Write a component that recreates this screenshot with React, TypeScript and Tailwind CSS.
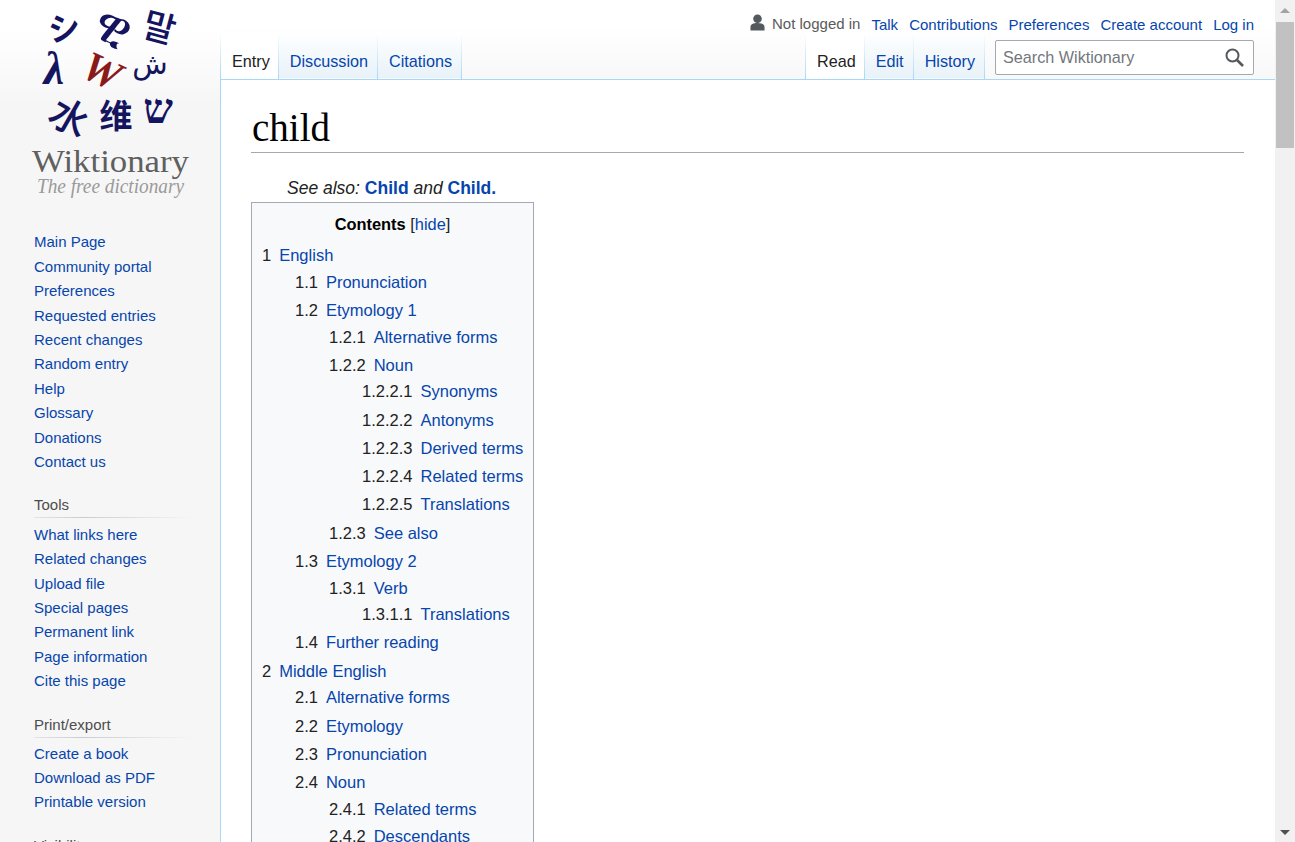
const mainNav = ["Main Page", "Community portal", "Preferences", "Requested entries", "Recent changes", "Random entry", "Help", "Glossary", "Donations", "Contact us"];
const toolsNav = ["What links here", "Related changes", "Upload file", "Special pages", "Permanent link", "Page information", "Cite this page"];
const printNav = ["Create a book", "Download as PDF", "Printable version"];

type TocItem = { num: string; label: string; pad: string; h: string };

// row heights are not even in the page, nested lists add a bit
const toc: TocItem[] = [
  { num: "1", label: "English", pad: "pl-[10px]", h: "h-[27px]" },
  { num: "1.1", label: "Pronunciation", pad: "pl-[43px]", h: "h-[28px]" },
  { num: "1.2", label: "Etymology 1", pad: "pl-[43px]", h: "h-[27px]" },
  { num: "1.2.1", label: "Alternative forms", pad: "pl-[77px]", h: "h-[28px]" },
  { num: "1.2.2", label: "Noun", pad: "pl-[77px]", h: "h-[26px]" },
  { num: "1.2.2.1", label: "Synonyms", pad: "pl-[110px]", h: "h-[29px]" },
  { num: "1.2.2.2", label: "Antonyms", pad: "pl-[110px]", h: "h-[28px]" },
  { num: "1.2.2.3", label: "Derived terms", pad: "pl-[110px]", h: "h-[28px]" },
  { num: "1.2.2.4", label: "Related terms", pad: "pl-[110px]", h: "h-[28px]" },
  { num: "1.2.2.5", label: "Translations", pad: "pl-[110px]", h: "h-[29px]" },
  { num: "1.2.3", label: "See also", pad: "pl-[77px]", h: "h-[28px]" },
  { num: "1.3", label: "Etymology 2", pad: "pl-[43px]", h: "h-[27px]" },
  { num: "1.3.1", label: "Verb", pad: "pl-[77px]", h: "h-[26px]" },
  { num: "1.3.1.1", label: "Translations", pad: "pl-[110px]", h: "h-[28px]" },
  { num: "1.4", label: "Further reading", pad: "pl-[43px]", h: "h-[29px]" },
  { num: "2", label: "Middle English", pad: "pl-[10px]", h: "h-[26px]" },
  { num: "2.1", label: "Alternative forms", pad: "pl-[43px]", h: "h-[29px]" },
  { num: "2.2", label: "Etymology", pad: "pl-[43px]", h: "h-[28px]" },
  { num: "2.3", label: "Pronunciation", pad: "pl-[43px]", h: "h-[28px]" },
  { num: "2.4", label: "Noun", pad: "pl-[43px]", h: "h-[27px]" },
  { num: "2.4.1", label: "Related terms", pad: "pl-[77px]", h: "h-[27px]" },
  { num: "2.4.2", label: "Descendants", pad: "pl-[77px]", h: "h-[28px]" },
];

const Logo = () => (
  <svg width="220" height="205" viewBox="0 0 220 205" className="block shrink-0">
    <g fill="#14145f" textAnchor="middle" dominantBaseline="central">
      <text x="64" y="26" fontSize="32" fontWeight="700" fontFamily="'Noto Sans CJK JP',sans-serif" transform="rotate(-8 64 26)">シ</text>
      <text x="114" y="26" fontSize="52" fontFamily="'DejaVu Sans',sans-serif" transform="rotate(30 114 26)">ዊ</text>
      <text x="160" y="25" fontSize="35" fontWeight="500" fontFamily="'Noto Sans CJK KR',sans-serif" transform="rotate(15 160 25)">말</text>
      <text x="54" y="68" fontSize="46" fontWeight="700" fontStyle="italic" fontFamily="'Liberation Serif',serif">λ</text>
      <text x="150" y="64" fontSize="29" fontFamily="'DejaVu Sans',sans-serif">ش</text>
      <text x="71" y="115" fontSize="39" fontWeight="500" fontFamily="'Noto Sans CJK SC',sans-serif" transform="rotate(30 71 115)">水</text>
      <text x="116" y="114" fontSize="33" fontWeight="700" fontFamily="'Noto Sans CJK SC',sans-serif">维</text>
      <text x="158" y="108" fontSize="42" fontWeight="700" fontFamily="'DejaVu Serif',serif">ש</text>
    </g>
    <text x="102" y="71" fontSize="42" fontWeight="700" textAnchor="middle" dominantBaseline="central" fill="#8a1a1a" fontFamily="'Liberation Serif',serif" fontStyle="italic" transform="rotate(25 102 71)">W</text>
    <text x="110.500" y="172" fontSize="32" textAnchor="middle" fill="#5f5f5f" fontFamily="'Liberation Serif',serif" textLength="157" lengthAdjust="spacingAndGlyphs">Wiktionary</text>
    <text x="110.500" y="193" fontSize="21" textAnchor="middle" fill="#9a9a9a" fontStyle="italic" fontFamily="'Liberation Serif',serif" textLength="147" lengthAdjust="spacingAndGlyphs">The free dictionary</text>
  </svg>
);

const NavLinks = ({ items }: { items: string[] }) => (
  <ul className="flex flex-col">
    {items.map((item) => (
      <li key={item} className="h-[24.4px] shrink-0 leading-[24.4px]">
        <a className="text-[#0645ad] text-[15px]">{item}</a>
      </li>
    ))}
  </ul>
);

const NavHeading = ({ label }: { label: string }) => (
  <div className="w-[160px]">
    <div className="text-[15px] text-[#4d4d4d] h-[24px] leading-[24px]">{label}</div>
    <div className="h-px bg-gradient-to-r from-[#e4e4e8] via-[#c8ccd1] via-30% to-transparent" />
  </div>
);

const Sidebar = () => (
  <div className="w-[220px] shrink-0 h-full overflow-hidden bg-gradient-to-b from-white from-[30px] to-[#f6f6f6] to-[105px] flex flex-col">
    <Logo />
    <div className="pl-[34px] pt-[25.4px] shrink-0">
      <NavLinks items={mainNav} />
    </div>
    <div className="pl-[34px] pt-[18.6px] shrink-0">
      <NavHeading label="Tools" />
      <div className="pt-[5px]">
        <NavLinks items={toolsNav} />
      </div>
    </div>
    <div className="pl-[34px] pt-[19px] shrink-0">
      <NavHeading label="Print/export" />
      <div className="pt-[4px]">
        <NavLinks items={printNav} />
      </div>
    </div>
    <div className="pl-[34px] pt-[19px] shrink-0">
      <div className="text-[15px] text-[#4d4d4d] h-[24px] leading-[24px]">Visibility</div>
    </div>
  </div>
);

const Sep = () => <div className="w-px self-stretch shrink-0 bg-gradient-to-b from-white to-[#a7d7f9]" />;

const Tab = ({ label, active }: { label: string; active?: boolean }) => (
  <div className={`flex items-end pl-[11px] ${active ? "bg-white text-[#222] h-[47px] relative pr-[8px] pb-[8px]" : "bg-gradient-to-b from-white to-[#e8f2f8] text-[#0645ad] h-[46px] pr-[9px] pb-[7px]"}`}>
    <span className="text-[16.2px] leading-[20px]">{label}</span>
  </div>
);

const Header = () => (
  <div className="h-[80px] shrink-0 flex flex-col bg-gradient-to-b from-white from-[25px] to-[#f8f8f8]">
    <div className="h-[35px] -mb-[2px] flex justify-end items-end gap-[11px] pr-[21px] text-[15px] leading-[18px] text-[#0645ad]">
      <span className="flex items-center gap-[7px] text-[#5a5a5a]">
        <svg width="15" height="17" viewBox="0 0 16 18" fill="#54595d" className="mb-[3px]">
          <circle cx="8" cy="5" r="4.600" />
          <path d="M0.500 17.500v-3.700C0.500 11 3.500 9.500 8 9.500s7.500 1.500 7.500 4.300v3.700z" />
        </svg>
        Not logged in
      </span>
      <a>Talk</a>
      <a>Contributions</a>
      <a>Preferences</a>
      <a>Create account</a>
      <a>Log in</a>
    </div>
    <div className="flex-1 flex justify-between border-b border-[#a7d7f9]">
      <div className="flex">
        <Sep />
        <Tab label="Entry" active />
        <Sep />
        <Tab label="Discussion" />
        <Sep />
        <Tab label="Citations" />
        <Sep />
      </div>
      <div className="flex">
        <Sep />
        <Tab label="Read" active />
        <Sep />
        <Tab label="Edit" />
        <Sep />
        <Tab label="History" />
        <Sep />
        <div className="pl-[10px] pr-[21px] pt-[8px]">
          <div className="w-[259px] h-[35px] bg-white border border-[#a2a9b1] rounded-[2px] flex items-center justify-between pl-[7px] pr-[9px]">
            <span className="text-[16.2px] text-[#72777d]">Search Wiktionary</span>
            <svg width="19" height="19" viewBox="0 0 19 19" fill="none" stroke="#54595d" strokeWidth="2">
              <circle cx="7.500" cy="7.500" r="6" />
              <path d="M12 12l6 6" strokeWidth="2.600" />
            </svg>
          </div>
        </div>
      </div>
    </div>
  </div>
);

const Toc = () => (
  <div className="w-[283px] border border-[#a2a9b1] bg-[#f8f9fa] pt-[9px]">
    <div className="text-center text-[16.4px] leading-[24px] text-[#222] mb-[5px]">
      <b className="text-black">Contents</b> <span>[<a className="text-[#0645ad]">hide</a>]</span>
    </div>
    <ul>
      {toc.map((row) => (
        <li key={row.num} className={`${row.pad} ${row.h} leading-[28px] text-[16.5px] whitespace-nowrap text-[#222]`}>
          <span className="mr-[8px]">{row.num}</span>
          <a className="text-[#0645ad]">{row.label}</a>
        </li>
      ))}
    </ul>
  </div>
);

const Scrollbar = () => (
  <div className="w-[20px] shrink-0 h-full bg-[#f1f1f1] flex flex-col items-center">
    <div className="h-[20px] flex items-center justify-center">
      <div className="w-0 h-0 border-x-[5px] border-x-transparent border-b-[5px] border-b-[#a3a3a3]" />
    </div>
    <div className="w-[18px] h-[126px] bg-[#c1c1c1] mt-[2px]" />
    <div className="flex-1" />
    <div className="h-[20px] flex items-center justify-center">
      <div className="w-0 h-0 border-x-[5px] border-x-transparent border-t-[5px] border-t-[#505050]" />
    </div>
  </div>
);

export default function App() {
  return (
    <div className="font-['Liberation_Sans',Arial,sans-serif] h-[842px] w-[1295px] overflow-hidden flex bg-white">
      <Sidebar />
      <div className="flex-1 flex flex-col min-w-0 h-full">
        <Header />
        <div className="flex-1 border-l border-[#a7d7f9] pl-[30px] pr-[31px] overflow-hidden">
          <h1 className="font-['Liberation_Serif',serif] text-[39px] leading-[48px] text-black border-b border-[#a2a9b1] pt-[24px] pl-[1px] h-[73px]">child</h1>
          <div className="pl-[36px] pt-[24px] pb-[3px] text-[17.5px] leading-[22px] italic text-[#222]">
            See also: <b className="not-italic text-[#0645ad]">Child</b> and <b className="not-italic text-[#0645ad]">Child.</b>
          </div>
          <Toc />
        </div>
      </div>
      <Scrollbar />
    </div>
  );
}
